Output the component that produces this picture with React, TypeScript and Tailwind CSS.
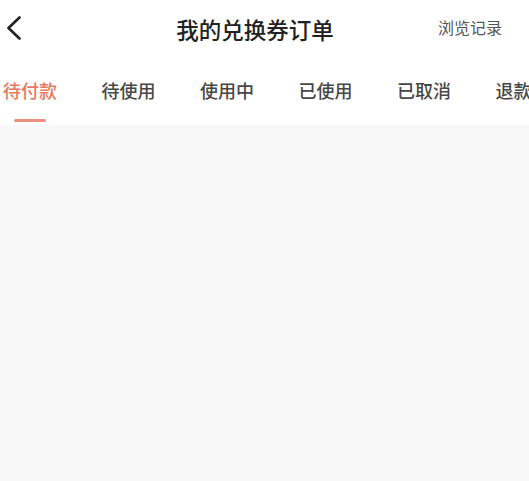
const tabs = ["待付款", "待使用", "使用中", "已使用", "已取消", "退款"];

const font = {
  fontFamily: '"Noto Sans CJK SC", "Noto Sans", sans-serif',
};

export default function App() {
  return (
    <div className="w-[529px] h-[481px] overflow-hidden bg-[#f8f8f8]" style={font}>
      <div className="bg-white">
        {/* top bar */}
        <div className="relative flex h-[60px] items-center justify-center">
          <button className="absolute left-[6px] top-[16px] text-[#222]">
            <svg width="16" height="24" viewBox="0 0 16 24" fill="none">
              <path
                d="M13.5 1.5 L2.5 12 L13.5 22.5"
                stroke="currentColor"
                strokeWidth="2.6"
                strokeLinecap="round"
                strokeLinejoin="round"
              />
            </svg>
          </button>
          <h1 className="text-[22.5px] font-medium leading-none text-[#222] -mt-[2px] -ml-[19px]">
            我的兑换券订单
          </h1>
          <span className="absolute right-[27px] top-[19px] text-[16px] leading-none text-[#555]">
            浏览记录
          </span>
        </div>

        {/* status tabs */}
        <div className="flex h-[65px] gap-[44.5px] overflow-hidden whitespace-nowrap pl-[3px] pt-[21px]">
          {tabs.map((t, i) => (
            <div key={t} className="flex shrink-0 flex-col items-center">
              <span
                className={
                  i === 0
                    ? "text-[18px] font-medium leading-none text-[#e9785f]"
                    : "text-[18px] font-medium leading-none text-[#474747]"
                }
              >
                {t}
              </span>
              {i === 0 && (
                <span className="mt-[20px] h-[3px] w-[32px] rounded-full bg-[#eb907f]" />
              )}
            </div>
          ))}
        </div>
      </div>
    </div>
  );
}
